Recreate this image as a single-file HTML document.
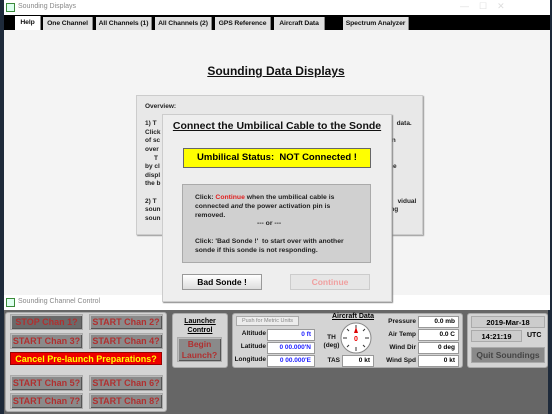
<!DOCTYPE html><html><head><style>
*{margin:0;padding:0;box-sizing:border-box}
body{width:552px;height:414px;overflow:hidden;background:#1e2a3a;font-family:"Liberation Sans",sans-serif;position:relative}
.a{position:absolute;white-space:nowrap}
.b{font-weight:bold}
.tab{position:absolute;top:17px;height:13px;background:#e0e0e0;font-size:6.8px;font-weight:bold;text-align:center;line-height:13px;color:#111;border-right:1px solid #888;white-space:nowrap;overflow:hidden;letter-spacing:-0.1px}
.btn{position:absolute;background:#8a8a8a;border:1px solid #aaa;color:#b03030;font-size:9px;font-weight:bold;text-align:center;line-height:14px;box-shadow:inset 1px 1px 0 #bbb,inset -1px -1px 0 #555;white-space:nowrap}
.lbl{position:absolute;font-size:6.5px;font-weight:bold;text-align:right;color:#111;white-space:nowrap}
.fld{position:absolute;background:#fff;border:1px solid #999;font-size:6.5px;font-weight:bold;text-align:right;padding-right:3px;line-height:10px;white-space:nowrap}
.pn{position:absolute;background:#d4d4d4;border:1px solid #aaa;border-radius:3px}
</style></head><body>
<!-- bottom window -->
<div class="a" style="left:4px;top:295px;width:546px;height:15px;background:#fff"></div>
<div class="a" style="left:6px;top:298px;width:9px;height:9px;border:1px solid #3a8a3a;background:#dfe"></div>
<div class="a" style="left:18px;top:298px;font-size:7px;color:#888">Sounding Channel Control</div>
<!-- top window -->
<div class="a" style="left:4px;top:0;width:546px;height:295px;background:#f4f4f4"></div>
<div class="a" style="left:4px;top:0;width:546px;height:15px;background:#fff"></div>
<div class="a" style="left:6px;top:3px;width:9px;height:9px;border:1px solid #3a8a3a;background:#dfe"></div>
<div class="a" style="left:18px;top:3px;font-size:7px;color:#888">Sounding Displays</div>
<div class="a" style="left:460px;top:1px;font-size:9px;color:#ddd">—&nbsp;&nbsp;&nbsp;&nbsp;☐&nbsp;&nbsp;&nbsp;&nbsp;✕</div>
<div class="a" style="left:4px;top:15px;width:546px;height:15px;background:#000"></div>
<div class="tab" style="left:15px;width:26px;background:#fff;top:16px;height:14px">Help</div>
<div class="tab" style="left:43px;width:50px">One Channel</div>
<div class="tab" style="left:96px;width:56px">All Channels (1)</div>
<div class="tab" style="left:155px;width:57px">All Channels (2)</div>
<div class="tab" style="left:215px;width:56px">GPS Reference</div>
<div class="tab" style="left:274px;width:51px">Aircraft Data</div>
<div class="tab" style="left:343px;width:66px">Spectrum Analyzer</div>
<div class="a b" style="left:0;width:552px;top:64px;text-align:center;font-size:12px;text-decoration:underline;color:#111">Sounding Data Displays</div>
<!-- help panel -->
<div class="a" style="left:136px;top:95px;width:287px;height:140px;background:#e8e8e8;border:1px solid #ccc;box-shadow:1px 1px 1px #999"></div>
<div class="a b" style="left:145px;top:103px;font-size:6.5px;line-height:8.6px;color:#222;width:272px">Overview:<br><br>1) T<span style="padding-left:240px">data.</span><br>Click<br>of sc<span style="padding-left:228px">an</span><br>over<br>&nbsp;&nbsp;&nbsp;&nbsp;&nbsp;T<br>by cl<span style="padding-left:227px">the</span><br>displ<br>the b<br><br>2) T<span style="padding-left:241px">vidual</span><br>soun<span style="padding-left:228px">ing</span><br>soun</div>
<!-- dialog -->
<div class="a" style="left:162px;top:114px;width:230px;height:188px;background:#eee;border:1px solid #ccc;box-shadow:1px 1px 1px #888"></div>
<div class="a b" style="left:162px;top:120px;width:230px;text-align:center;font-size:10.5px;text-decoration:underline;color:#111">Connect the Umbilical Cable to the Sonde</div>
<div class="a b" style="left:183px;top:148px;width:188px;height:20px;background:#ffff00;border:1px solid #666;text-align:center;font-size:9.5px;line-height:18px">Umbilical Status:&nbsp; NOT Connected !</div>
<div class="a" style="left:182px;top:184px;width:189px;height:79px;background:#d0d0d0;border:1px solid #aaa"></div>
<div class="a b" style="left:195px;top:194px;font-size:6.8px;line-height:8.8px;color:#222;width:170px">Click: <span style="color:#e02020">Continue</span> when the umbilical cable is<br>connected <i>and</i> the power activation pin is<br>removed.<br><span style="padding-left:62px">--- or ---</span><br><br>Click: 'Bad Sonde !'&nbsp; to start over with another<br>sonde if this sonde is not responding.</div>
<div class="a b" style="left:182px;top:274px;width:80px;height:16px;background:linear-gradient(#fff,#ddd);border:1px solid #999;text-align:center;font-size:8.5px;line-height:14px">Bad Sonde !</div>
<div class="a b" style="left:290px;top:274px;width:80px;height:16px;background:#e6e6e6;border:1px solid #ccc;text-align:center;font-size:8.5px;line-height:14px;color:#f0a0a0">Continue</div>
<!-- bottom content -->
<div class="a" style="left:4px;top:310px;width:544px;height:104px;background:#666"></div>
<div class="pn" style="left:5px;top:312px;width:162px;height:100px"></div>
<div class="btn" style="left:10px;top:314px;width:73px;height:16px;background:#6a6a6a">STOP Chan 1?</div>
<div class="btn" style="left:89px;top:314px;width:74px;height:16px">START Chan 2?</div>
<div class="btn" style="left:10px;top:333px;width:73px;height:16px">START Chan 3?</div>
<div class="btn" style="left:89px;top:333px;width:74px;height:16px">START Chan 4?</div>
<div class="a b" style="left:10px;top:352px;width:152px;height:13px;background:#ee0000;color:#ffff00;font-size:9px;text-align:center;line-height:13px;border:1px solid #900">Cancel Pre-launch Preparations?</div>
<div class="btn" style="left:10px;top:375px;width:73px;height:16px">START Chan 5?</div>
<div class="btn" style="left:89px;top:375px;width:74px;height:16px">START Chan 6?</div>
<div class="btn" style="left:10px;top:393px;width:73px;height:16px">START Chan 7?</div>
<div class="btn" style="left:89px;top:393px;width:74px;height:16px">START Chan 8?</div>
<div class="pn" style="left:172px;top:313px;width:56px;height:55px"></div>
<div class="a b" style="left:172px;top:317px;width:56px;text-align:center;font-size:7px;line-height:9px;text-decoration:underline">Launcher<br>Control</div>
<div class="btn" style="left:177px;top:337px;width:45px;height:25px;font-size:8.5px;line-height:11px;padding-top:1px">Begin<br>Launch?</div>
<div class="pn" style="left:232px;top:313px;width:231px;height:55px"></div>
<div class="a" style="left:236px;top:316px;width:63px;height:10px;background:#ececec;border:1px solid #aaa;font-size:5.5px;color:#888;text-align:center;line-height:9px">Push for Metric Units</div>
<div class="lbl" style="left:232px;top:330px;width:34px">Altitude</div>
<div class="lbl" style="left:232px;top:343px;width:34px">Latitude</div>
<div class="lbl" style="left:232px;top:356px;width:34px">Longitude</div>
<div class="fld" style="left:267px;top:329px;width:48px;color:#22f">0 ft</div>
<div class="fld" style="left:267px;top:342px;width:48px;color:#22f">0 00.000'N</div>
<div class="fld" style="left:267px;top:355px;width:48px;color:#22f">0 00.000'E</div>
<div class="a b" style="left:332px;top:313px;font-size:7px;text-decoration:underline">Aircraft Data</div>
<div class="lbl" style="left:322px;top:334px;width:19px;text-align:center;line-height:8px">TH<br>(deg)</div>
<svg class="a" style="left:340px;top:322px" width="32" height="32" viewBox="0 0 32 32"><circle cx="16" cy="16" r="15" fill="#fff" stroke="#888"/><g stroke="#333" stroke-width="1"><line x1="16" y1="3" x2="16" y2="7"/><line x1="16" y1="25" x2="16" y2="29"/><line x1="3" y1="16" x2="7" y2="16"/><line x1="25" y1="16" x2="29" y2="16"/><line x1="7" y1="7" x2="9" y2="9"/><line x1="25" y1="7" x2="23" y2="9"/><line x1="7" y1="25" x2="9" y2="23"/><line x1="25" y1="25" x2="23" y2="23"/></g><polygon points="16,5 18,11 14,11" fill="#d00"/><text x="16" y="19" font-size="7" font-weight="bold" fill="#e00" text-anchor="middle" font-family="Liberation Sans">0</text></svg>
<div class="lbl" style="left:320px;top:357px;width:20px">TAS</div>
<div class="fld" style="left:342px;top:355px;width:32px">0 kt</div>
<div class="lbl" style="left:378px;top:318px;width:38px">Pressure</div>
<div class="lbl" style="left:378px;top:331px;width:38px">Air Temp</div>
<div class="lbl" style="left:378px;top:344px;width:38px">Wind Dir</div>
<div class="lbl" style="left:378px;top:357px;width:38px">Wind Spd</div>
<div class="fld" style="left:418px;top:316px;width:41px">0.0 mb</div>
<div class="fld" style="left:418px;top:329px;width:41px">0.0 C</div>
<div class="fld" style="left:418px;top:342px;width:41px">0 deg</div>
<div class="fld" style="left:418px;top:355px;width:41px">0 kt</div>
<div class="pn" style="left:467px;top:313px;width:81px;height:55px"></div>
<div class="a b" style="left:471px;top:316px;width:74px;height:12px;background:#ccc;border:1px solid #aaa;text-align:center;font-size:7.5px;line-height:11px">2019-Mar-18</div>
<div class="a b" style="left:471px;top:330px;width:51px;height:12px;background:#ccc;border:1px solid #aaa;text-align:center;font-size:7.5px;line-height:11px">14:21:19</div>
<div class="a b" style="left:527px;top:332px;font-size:7px">UTC</div>
<div class="a b" style="left:471px;top:347px;width:74px;height:16px;background:#8a8a8a;border:1px solid #aaa;text-align:center;font-size:8.5px;line-height:14px;color:#444">Quit Soundings</div>
</body></html>
